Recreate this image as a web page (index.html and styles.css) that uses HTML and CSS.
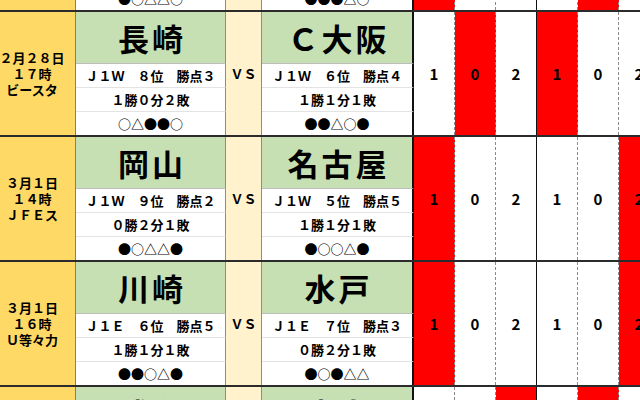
FILE: index.html
```html
<!DOCTYPE html>
<html lang="ja">
<head>
<meta charset="utf-8">
<title>対戦表</title>
<link rel="stylesheet" href="styles.css">
</head>
<body>
<div class="sheet">

  <div class="block">
    <div class="date">２月２８日<br>１４時<br>Ｅスタ</div>
    <div class="home name">広島</div>
    <div class="home info">Ｊ１Ｗ　３位　勝点６</div>
    <div class="home rec">２勝０分１敗</div>
    <div class="home res">●○△△○</div>
    <div class="vs">ＶＳ</div>
    <div class="away name">Ｇ大阪</div>
    <div class="away info">Ｊ１Ｗ　２位　勝点７</div>
    <div class="away rec">２勝１分０敗</div>
    <div class="away res">●●●△○</div>
    <div class="score c1 red">1</div>
    <div class="score c2">0</div>
    <div class="score c3">2</div>
    <div class="score c4">1</div>
    <div class="score c5 red">0</div>
    <div class="score c6">2</div>
  </div>

  <div class="block">
    <div class="date">２月２８日<br>１７時<br>ビースタ</div>
    <div class="home name">長崎</div>
    <div class="home info">Ｊ１Ｗ　８位　勝点３</div>
    <div class="home rec">１勝０分２敗</div>
    <div class="home res">○△●●○</div>
    <div class="vs">ＶＳ</div>
    <div class="away name">Ｃ大阪</div>
    <div class="away info">Ｊ１Ｗ　６位　勝点４</div>
    <div class="away rec">１勝１分１敗</div>
    <div class="away res">●●△○●</div>
    <div class="score c1">1</div>
    <div class="score c2 red">0</div>
    <div class="score c3">2</div>
    <div class="score c4 red">1</div>
    <div class="score c5">0</div>
    <div class="score c6">2</div>
  </div>

  <div class="block">
    <div class="date">３月１日<br>１４時<br>ＪＦＥス</div>
    <div class="home name">岡山</div>
    <div class="home info">Ｊ１Ｗ　９位　勝点２</div>
    <div class="home rec">０勝２分１敗</div>
    <div class="home res">●○△△●</div>
    <div class="vs">ＶＳ</div>
    <div class="away name">名古屋</div>
    <div class="away info">Ｊ１Ｗ　５位　勝点５</div>
    <div class="away rec">１勝１分１敗</div>
    <div class="away res">●○○△●</div>
    <div class="score c1 red">1</div>
    <div class="score c2">0</div>
    <div class="score c3">2</div>
    <div class="score c4">1</div>
    <div class="score c5">0</div>
    <div class="score c6 red">2</div>
  </div>

  <div class="block">
    <div class="date">３月１日<br>１６時<br>Ｕ等々力</div>
    <div class="home name">川崎</div>
    <div class="home info">Ｊ１Ｅ　６位　勝点５</div>
    <div class="home rec">１勝１分１敗</div>
    <div class="home res">●●○△●</div>
    <div class="vs">ＶＳ</div>
    <div class="away name">水戸</div>
    <div class="away info">Ｊ１Ｅ　７位　勝点３</div>
    <div class="away rec">０勝２分１敗</div>
    <div class="away res">●○●△△</div>
    <div class="score c1 red">1</div>
    <div class="score c2">0</div>
    <div class="score c3">2</div>
    <div class="score c4">1</div>
    <div class="score c5">0</div>
    <div class="score c6 red">2</div>
  </div>

  <div class="block">
    <div class="date">３月１日<br>１９時<br>埼スタ</div>
    <div class="home name">浦和</div>
    <div class="home info">Ｊ１Ｅ　４位　勝点５</div>
    <div class="home rec">１勝１分１敗</div>
    <div class="home res">○●△○●</div>
    <div class="vs">ＶＳ</div>
    <div class="away name">鹿島</div>
    <div class="away info">Ｊ１Ｅ　２位　勝点６</div>
    <div class="away rec">２勝０分１敗</div>
    <div class="away res">●○○△●</div>
    <div class="score c1">1</div>
    <div class="score c2">0</div>
    <div class="score c3 red">2</div>
    <div class="score c4">1</div>
    <div class="score c5 red">0</div>
    <div class="score c6">2</div>
  </div>

</div>
</body>
</html>
```

FILE: styles.css
```css
html, body {
  margin: 0;
  padding: 0;
}

body {
  width: 640px;
  height: 400px;
  overflow: hidden;
  background: #ffffff;
  color: #000000;
  font-family: "Noto Sans CJK JP", "Noto Sans", sans-serif;
}

.sheet {
  width: 671px;
  margin: -115px 0 0 -11px;
}

.block {
  display: grid;
  grid-template-columns: 87px 150px 36px 152px repeat(6, 41px);
  grid-template-rows: 51px 24px 24px 24px;
  border-top: 2px solid #2b2b2b;
}

.date,
.name,
.info,
.rec,
.res,
.vs,
.score {
  display: flex;
  align-items: center;
  justify-content: center;
  box-sizing: border-box;
  text-align: center;
  white-space: nowrap;
}

.date {
  grid-column: 1;
  grid-row: 1 / 5;
  background: #ffd966;
  border-right: 1px solid #7f7f7f;
  font-size: 13px;
  font-weight: 700;
  line-height: 16px;
}

.home {
  grid-column: 2;
  border-right: 1px solid #8c8c8c;
}

.away {
  grid-column: 4;
  border-right: 2px solid #111111;
}

.name {
  grid-row: 1;
  background: #c6e0b4;
  font-size: 31px;
  font-weight: 700;
  letter-spacing: 3px;
  padding-left: 3px;
  line-height: 1;
}

.info,
.rec,
.res {
  background: #ffffff;
  font-size: 13px;
  font-weight: 700;
  line-height: 1;
}

.info {
  grid-row: 2;
  border-top: 1px solid #bdbdbd;
}

.rec {
  grid-row: 3;
  border-top: 1px solid #e3e3e3;
}

.res {
  grid-row: 4;
  border-top: 1px solid #e3e3e3;
}

.vs {
  grid-column: 3;
  grid-row: 1 / 5;
  background: #fff2cc;
  border-right: 1px solid #8c8c8c;
  font-size: 13px;
  font-weight: 700;
}

.score {
  grid-row: 1 / 5;
  background: #ffffff;
  border-right: 1px dashed #8a8a8a;
  font-size: 15px;
  font-weight: 700;
}

.score.red {
  background: #ff0000;
}

.c1 { grid-column: 5; }
.c2 { grid-column: 6; }
.c3 { grid-column: 7; border-right: 1px solid #111111; }
.c4 { grid-column: 8; }
.c5 { grid-column: 9; }
.c6 { grid-column: 10; border-right: 1px solid #111111; }
```
